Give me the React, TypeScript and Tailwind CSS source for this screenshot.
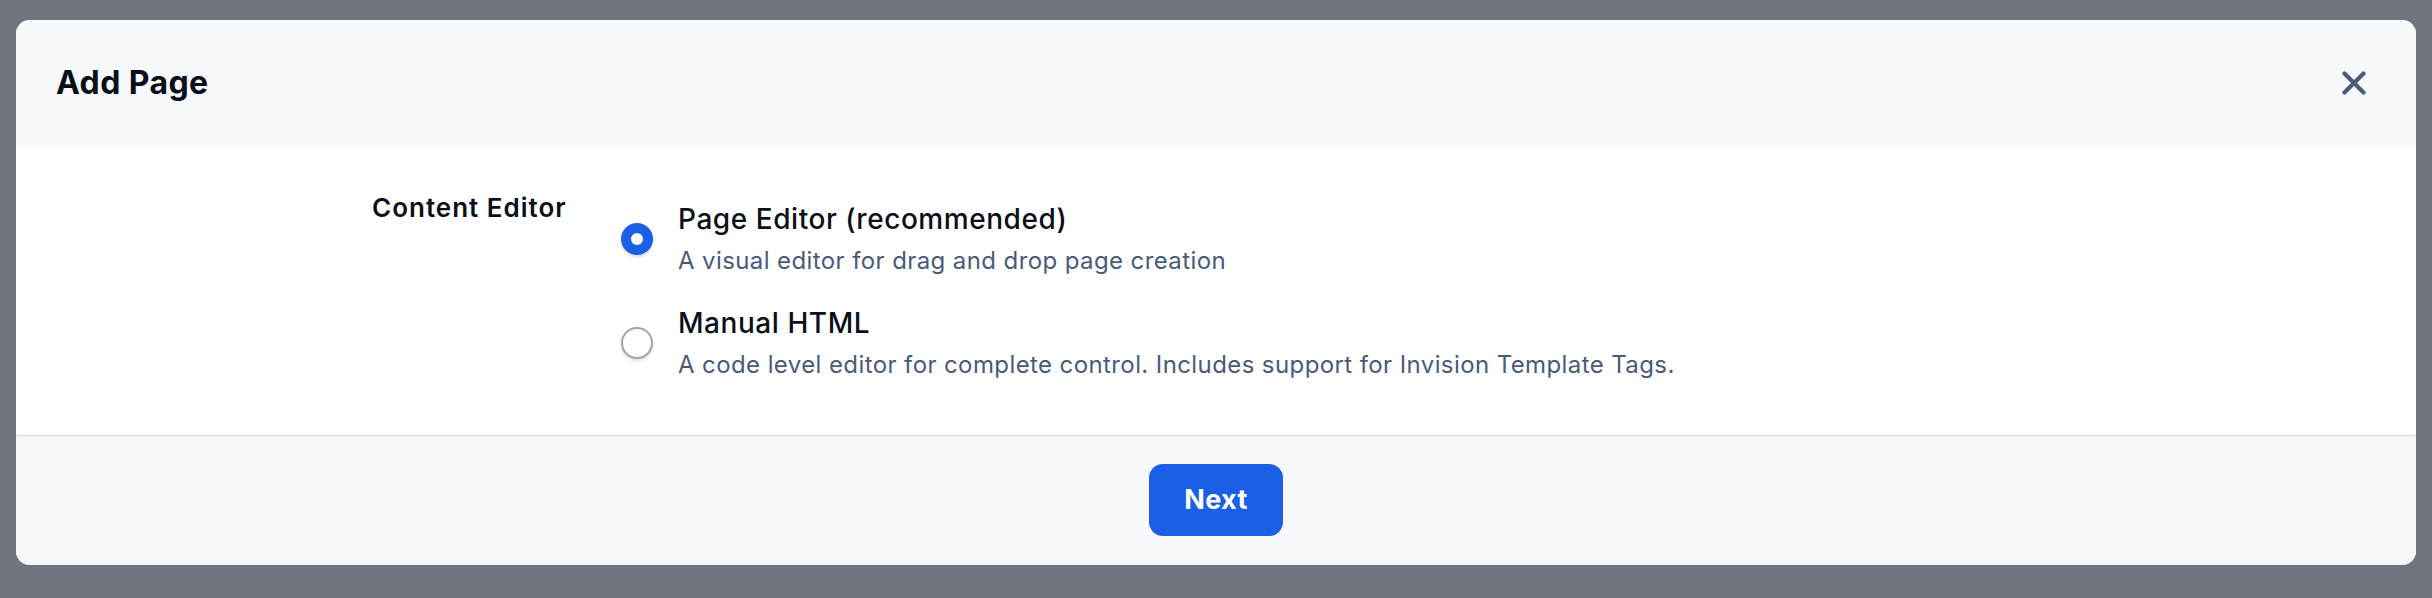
import { useState } from "react"

const options = [
  {
    id: "editor",
    title: "Page Editor (recommended)",
    description: "A visual editor for drag and drop page creation",
  },
  {
    id: "html",
    title: "Manual HTML",
    description: "A code level editor for complete control. Includes support for Invision Template Tags.",
  },
]

const Radio = ({ checked }: { checked: boolean }) => {
  if (checked) {
    return (
      <span className="flex h-[32px] w-[32px] shrink-0 items-center justify-center rounded-full bg-[#1a5fe5] shadow-[0_2px_3px_rgba(0,0,0,0.15)]">
        <span className="h-[12px] w-[12px] rounded-full bg-white" />
      </span>
    )
  }
  return (
    <span className="h-[32px] w-[32px] shrink-0 rounded-full border-2 border-[#a3a3a3] bg-white shadow-[0_2px_3px_rgba(0,0,0,0.12)]" />
  )
}

export default function App() {
  const [selected, setSelected] = useState("editor")

  return (
    <div
      className="h-[598px] w-full bg-[#6f747d] pt-[20px] pl-[16px]"
      style={{ fontFamily: "Inter, 'Noto Sans', sans-serif" }}
    >
      <div className="flex h-[545px] w-[2400px] flex-col overflow-hidden rounded-[14px] bg-white">
        <div className="flex h-[125px] items-center justify-between bg-[#f7f8fa] pl-[40px] pr-[50px]">
          <h1 className="text-[32px] font-bold tracking-[0.4px] text-[#0b0f19]">Add Page</h1>
          <button className="flex h-[24px] w-[24px] items-center justify-center text-[#4a5b7c]">
            <svg width="24" height="24" viewBox="0 0 24 24" fill="none" stroke="currentColor" strokeWidth="4.2" strokeLinecap="round">
              <path d="M2.5 2.5 L21.5 21.5 M21.5 2.5 L2.5 21.5" />
            </svg>
          </button>
        </div>

        <div className="flex h-[290px] pt-[45px] pl-[356px]">
          <div className="w-[249px] text-[26px] font-semibold leading-[36px] tracking-[1px] text-[#0b0f19]">
            Content Editor
          </div>
          <div className="flex flex-col gap-[24px] pt-[9px]">
            {options.map((o) => (
              <label
                key={o.id}
                className="flex cursor-pointer items-center gap-[25px]"
                onClick={() => setSelected(o.id)}
              >
                <Radio checked={selected === o.id} />
                <div className="flex flex-col">
                  <span className="text-[28px] font-medium leading-[40px] tracking-[0.55px] text-[#0b0f19]">
                    {o.title}
                  </span>
                  <span className="mt-[4px] text-[24px] leading-[36px] tracking-[0.4px] text-[#4a5a7a]">
                    {o.description}
                  </span>
                </div>
              </label>
            ))}
          </div>
        </div>

        <div className="flex flex-1 items-start justify-center border-t border-[#d8dde8] bg-[#f7f8fa] pt-[28px]">
          <button className="h-[72px] w-[134px] rounded-[14px] bg-[#1a5fe5] text-[27px] font-bold tracking-[0.3px] text-white">
            Next
          </button>
        </div>
      </div>
    </div>
  )
}
